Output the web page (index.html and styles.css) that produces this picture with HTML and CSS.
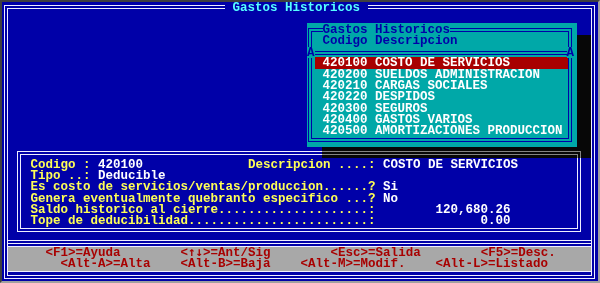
FILE: index.html
```html
<!DOCTYPE html>
<html lang="es">
<head>
  <meta charset="UTF-8">
  <meta name="viewport" content="width=device-width, initial-scale=1.0">
  <title>Gastos Historicos</title>
  <link rel="stylesheet" href="styles.css">
</head>
<body>
  <div class="screen">
    <div class="frame">
      <div class="frame-title">Gastos Historicos</div>

      <!-- Ventana de seleccion de cuentas -->
      <div class="shadow"></div>
      <div class="popup">
        <div class="popup-frame">
          <div class="popup-title">Gastos Historicos</div>
          <div class="popup-head">Codigo Descripcion</div>
          <div class="popup-sep"><span class="arrow">A</span><span class="sep-line"></span><span class="arrow">A</span></div>
          <ul class="popup-list">
            <li class="selected">420100 COSTO DE SERVICIOS</li>
            <li>420200 SUELDOS ADMINISTRACION</li>
            <li>420210 CARGAS SOCIALES</li>
            <li>420220 DESPIDOS</li>
            <li>420300 SEGUROS</li>
            <li>420400 GASTOS VARIOS</li>
            <li>420500 AMORTIZACIONES PRODUCCION</li>
          </ul>
        </div>
      </div>

      <!-- Datos de la cuenta -->
      <div class="detail">
        <div class="line"><span class="lbl">Codigo : </span><span class="val">420100</span><span class="lbl">              Descripcion ....: </span><span class="val">COSTO DE SERVICIOS</span></div>
        <div class="line"><span class="lbl">Tipo ..: </span><span class="val">Deducible</span></div>
        <div class="line"><span class="lbl">Es costo de servicios/ventas/produccion......? </span><span class="val">Si</span></div>
        <div class="line"><span class="lbl">Genera eventualmente quebranto especifico ...? </span><span class="val">No</span></div>
        <div class="line"><span class="lbl">Saldo historico al cierre....................: </span><span class="val">       120,680.26</span></div>
        <div class="line"><span class="lbl">Tope de deducibilidad........................: </span><span class="val">             0.00</span></div>
      </div>

      <!-- Teclas -->
      <div class="help">
        <div class="help-bar">
          <div class="line">     &lt;F1&gt;=Ayuda        &lt;<span class="arrows">↑↓</span>&gt;=Ant/Sig        &lt;Esc&gt;=Salida        &lt;F5&gt;=Desc.</div>
          <div class="line">       &lt;Alt-A&gt;=Alta    &lt;Alt-B&gt;=Baja    &lt;Alt-M&gt;=Modif.    &lt;Alt-L&gt;=Listado</div>
        </div>
      </div>
    </div>
  </div>
</body>
</html>
```

FILE: styles.css
```css
* {
  box-sizing: border-box;
}
body {
  margin: 0;
  background: #000;
}
.screen {
  width: 600px;
  height: 283px;
  display: flex;
  flex-direction: column;
  padding: 3px 3px 2.5px 2px;
  border: 2px solid #404040;
  border-right-color: #a0a0a0;
  border-bottom-color: #a0a0a0;
  background: #0000a8;
  font-family: "Liberation Mono", "DejaVu Sans Mono", monospace;
  font-size: 12.5px;
  font-weight: bold;
  line-height: 11.32px;
}
.frame {
  flex: 1;
  position: relative;
  border: 4px double #eeeeff;
}
.frame-title {
  width: max-content;
  height: 11.32px;
  margin: -6px 0 0 217px;
  padding: 0 7.5px;
  background: #0000a8;
  color: #55ffff;
}
.line {
  height: 11.32px;
  white-space: pre;
}

/* ventana emergente */
.shadow {
  position: absolute;
  left: 314px;
  top: 25.8px;
  width: 268.5px;
  height: 123.7px;
  backdrop-filter: grayscale(1) brightness(0.55);
}
.popup {
  position: absolute;
  left: 299px;
  top: 14px;
  width: 270px;
  height: 124px;
  padding: 5px 5px 0 1px;
  background: #00a8a8;
}
.popup-frame {
  border: 4px double #0000a8;
  padding-bottom: 1.5px;
}
.popup-title {
  width: max-content;
  margin: -6.8px 0 -0.7px 10.5px;
  background: #00a8a8;
  color: #0000a8;
}
.popup-head {
  margin-left: 10.5px;
  color: #0000a8;
}
.popup-sep {
  display: flex;
  height: 10.2px;
  margin: 0 -6px 0 -5px;
}
.arrow {
  width: 7.5px;
  height: 11.32px;
  padding-top: 1.2px;
  background: #00a8a8;
  color: #0000a8;
  text-align: center;
}
.sep-line {
  flex: 1;
  height: 0;
  margin-top: 3.4px;
  border-top: 4px double #0000a8;
}
.popup-list {
  list-style: none;
  margin: 0 0 0 3px;
  padding: 0;
  color: #fff;
}
.popup-list li {
  height: 11.32px;
  line-height: 13.7px;
  padding-left: 7.5px;
  white-space: pre;
}
.popup-list li.selected {
  background: #a80000;
}

/* datos */
.detail {
  margin: 136.7px 10px 0 9px;
  padding: 4.7px 0 0 9.5px;
  border: 4px double #eeeeff;
}
.lbl {
  color: #ffff55;
}
.val {
  color: #fff;
}

/* teclas */
.help {
  margin-top: 8.4px;
  border-top: 4px double #eeeeff;
}
.help-bar {
  margin-top: 2px;
  padding-top: 1px;
  border-top: 1px solid #eeeeff;
  border-bottom: 1px solid #eeeeff;
  background: #a8a8a8;
  color: #a80000;
}
.arrows {
  font-family: "DejaVu Sans Mono", monospace;
  line-height: 0;
}
```
